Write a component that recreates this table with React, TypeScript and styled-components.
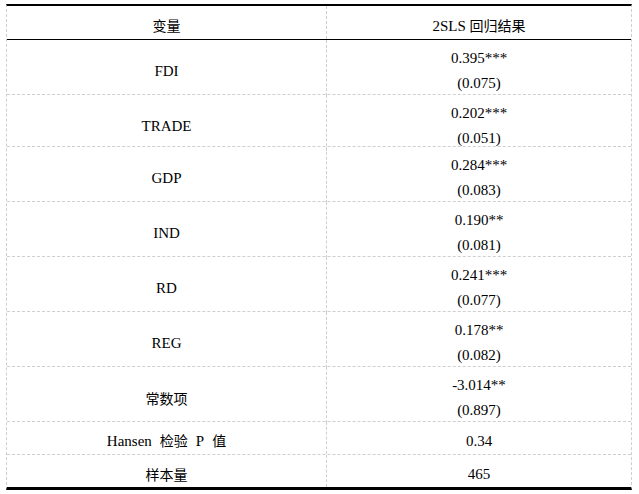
import React from "react";
import styled, { createGlobalStyle } from "styled-components";

const GlobalStyle = createGlobalStyle`
  body {
    margin: 0;
    background: #fff;
    font-family: "Liberation Serif", "Times New Roman", Tinos, "DejaVu Serif", serif;
    color: #000;
  }
`

const Sheet = styled.div`
  box-sizing: border-box;
  width: 626px;
  margin: 4px 0 0 6px;
  border-top: 2px solid #000;
  border-bottom: 3px solid #000;
  border-left: 1px dashed #cfcfcf;
  border-right: 1px dashed #cfcfcf;
`

const Row = styled.div<{ $h: number; $head?: boolean; $last?: boolean }>`
  box-sizing: border-box;
  display: grid;
  grid-template-columns: 320px 1fr;
  height: ${p => p.$h}px;
  border-bottom: ${p => (p.$last ? "none" : p.$head ? "1px solid #000" : "1px dashed #cfcfcf")};
`

const Cell = styled.div<{ $first?: boolean }>`
  box-sizing: border-box;
  display: flex;
  flex-direction: column;
  align-items: center;
  justify-content: center;
  padding-top: 6px;
  font-family: "Liberation Serif", "Times New Roman", Tinos, "DejaVu Serif", serif;
  font-size: 15px;
  line-height: 25px;
  border-right: ${p => (p.$first ? "1px dashed #cfcfcf" : "none")};
`

const Cjk = styled.span`
  font-family: "Noto Sans CJK SC", sans-serif;
  font-size: 14px;
`

const Gap = styled.span`
  display: inline-block;
  width: 8px;
`

type Item = { name: React.ReactNode; coef: string; se?: string; h: number }

const rows: Item[] = [
  { name: "FDI", coef: "0.395***", se: "(0.075)", h: 55 },
  { name: "TRADE", coef: "0.202***", se: "(0.051)", h: 52 },
  { name: "GDP", coef: "0.284***", se: "(0.083)", h: 55 },
  { name: "IND", coef: "0.190**", se: "(0.081)", h: 55 },
  { name: "RD", coef: "0.241***", se: "(0.077)", h: 55 },
  { name: "REG", coef: "0.178**", se: "(0.082)", h: 55 },
  { name: <Cjk>常数项</Cjk>, coef: "-3.014**", se: "(0.897)", h: 55 },
  {
    name: (
      <span>
        Hansen<Gap /><Cjk>检验</Cjk><Gap />P<Gap /><Cjk>值</Cjk>
      </span>
    ),
    coef: "0.34",
    h: 33,
  },
  { name: <Cjk>样本量</Cjk>, coef: "465", h: 32 },
]

export default function App() {
  return (
    <>
      <GlobalStyle />
      <Sheet>
        <Row $h={34} $head>
          <Cell $first><Cjk>变量</Cjk></Cell>
          <Cell>
            <span>2SLS <Cjk>回归结果</Cjk></span>
          </Cell>
        </Row>
        {rows.map((r, i) => (
          <Row key={i} $h={r.h} $last={i === rows.length - 1}>
            <Cell $first>{r.name}</Cell>
            <Cell>
              <span>{r.coef}</span>
              {r.se && <span>{r.se}</span>}
            </Cell>
          </Row>
        ))}
      </Sheet>
    </>
  )
}
